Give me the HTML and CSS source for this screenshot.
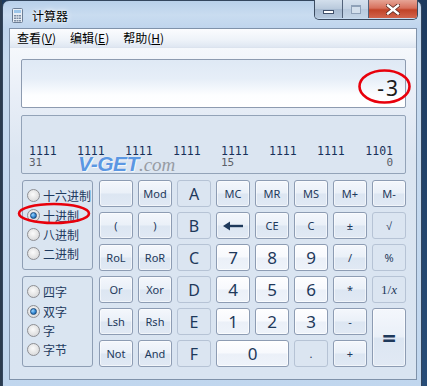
FILE: index.html
```html
<!DOCTYPE html>
<html lang="zh">
<head>
  <meta charset="UTF-8" />
  <title>计算器</title>
  <link rel="stylesheet" href="styles.css">
</head>
<body>
  <div class="window">
    <div class="titlebar">
      <svg class="app-icon" width="11" height="15" viewBox="0 0 11 15">
        <rect x="0.5" y="0.5" width="10" height="14" rx="1" fill="#e8eef5" stroke="#6d7f96"/>
        <rect x="2" y="2" width="7" height="3" fill="#9cc6ea"/>
        <g fill="#7c8da3">
          <rect x="2" y="7" width="2" height="1.5"/><rect x="4.5" y="7" width="2" height="1.5"/><rect x="7" y="7" width="2" height="1.5"/>
          <rect x="2" y="9.5" width="2" height="1.5"/><rect x="4.5" y="9.5" width="2" height="1.5"/><rect x="7" y="9.5" width="2" height="1.5"/>
          <rect x="2" y="12" width="2" height="1.5"/><rect x="4.5" y="12" width="2" height="1.5"/><rect x="7" y="12" width="2" height="1.5"/>
        </g>
      </svg>
      <span class="title">计算器</span>
      <div class="caption-buttons">
        <div class="cap cap-min"><span class="min-bar"></span></div>
        <div class="cap cap-max"><span class="max-box"></span></div>
        <div class="cap cap-close">
          <svg width="14" height="11" viewBox="0 0 14 11">
            <path d="M2 1.5 L12 9.5 M12 1.5 L2 9.5" stroke="#5a2a22" stroke-width="4" stroke-linecap="square"/>
            <path d="M2 1.5 L12 9.5 M12 1.5 L2 9.5" stroke="#fff" stroke-width="2.4" stroke-linecap="square"/>
          </svg>
        </div>
      </div>
    </div>

    <div class="client">
      <div class="menubar">
        <span class="menu-item">查看(<u>V</u>)</span>
        <span class="menu-item">编辑(<u>E</u>)</span>
        <span class="menu-item">帮助(<u>H</u>)</span>
      </div>

      <div class="content">
        <div class="display">
          <span class="value">-3</span>
        </div>

        <div class="binary">
          <div class="bits">
            <div class="group"><span>1111</span><span class="pos">31</span></div>
            <div class="group"><span>1111</span><span class="pos">&nbsp;</span></div>
            <div class="group"><span>1111</span><span class="pos">&nbsp;</span></div>
            <div class="group"><span>1111</span><span class="pos">&nbsp;</span></div>
            <div class="group"><span>1111</span><span class="pos">15</span></div>
            <div class="group"><span>1111</span><span class="pos">&nbsp;</span></div>
            <div class="group"><span>1111</span><span class="pos">&nbsp;</span></div>
            <div class="group right"><span>1101</span><span class="pos">0</span></div>
          </div>
          <div class="watermark"><span class="wm-main">V-GET</span><span class="wm-dom">.com</span></div>
        </div>

        <div class="keypad">
          <div class="side">
            <div class="panel">
              <label class="radio"><span class="dot"></span>十六进制</label>
              <label class="radio"><span class="dot checked"></span>十进制</label>
              <label class="radio"><span class="dot"></span>八进制</label>
              <label class="radio"><span class="dot"></span>二进制</label>
            </div>
            <div class="panel">
              <label class="radio"><span class="dot"></span>四字</label>
              <label class="radio"><span class="dot checked"></span>双字</label>
              <label class="radio"><span class="dot"></span>字</label>
              <label class="radio"><span class="dot"></span>字节</label>
            </div>
          </div>

          <div class="keys">
            <div class="key fn"></div>
            <div class="key fn">Mod</div>
            <div class="key off hex">A</div>
            <div class="key fn">MC</div>
            <div class="key fn">MR</div>
            <div class="key fn">MS</div>
            <div class="key fn">M+</div>
            <div class="key fn">M-</div>

            <div class="key fn">(</div>
            <div class="key fn">)</div>
            <div class="key off hex">B</div>
            <div class="key fn">
              <svg width="20" height="10" viewBox="0 0 20 10">
                <path d="M5 5 H20" stroke="#1e395b" stroke-width="2.4"/>
                <path d="M0 5 L7 0.5 V9.5 Z" fill="#1e395b"/>
              </svg>
            </div>
            <div class="key fn">CE</div>
            <div class="key fn">C</div>
            <div class="key fn">±</div>
            <div class="key off">√</div>

            <div class="key fn">RoL</div>
            <div class="key fn">RoR</div>
            <div class="key off hex">C</div>
            <div class="key num">7</div>
            <div class="key num">8</div>
            <div class="key num">9</div>
            <div class="key fn">/</div>
            <div class="key off">%</div>

            <div class="key fn">Or</div>
            <div class="key fn">Xor</div>
            <div class="key off hex">D</div>
            <div class="key num">4</div>
            <div class="key num">5</div>
            <div class="key num">6</div>
            <div class="key fn">*</div>
            <div class="key off recip">1/<i>x</i></div>

            <div class="key fn">Lsh</div>
            <div class="key fn">Rsh</div>
            <div class="key off hex">E</div>
            <div class="key num">1</div>
            <div class="key num">2</div>
            <div class="key num">3</div>
            <div class="key fn">-</div>
            <div class="key fn equals">=</div>

            <div class="key fn">Not</div>
            <div class="key fn">And</div>
            <div class="key off hex">F</div>
            <div class="key num zero">0</div>
            <div class="key off">.</div>
            <div class="key fn">+</div>
          </div>
        </div>
      </div>
    </div>
  </div>

  <svg class="mark mark-value" width="55" height="37" viewBox="0 0 55 37">
    <ellipse cx="27.5" cy="18.5" rx="25" ry="16" fill="none" stroke="#e8000b" stroke-width="2.6"/>
  </svg>
  <svg class="mark mark-radix" width="74" height="23" viewBox="0 0 74 23">
    <ellipse cx="37" cy="11.5" rx="35" ry="9.5" fill="none" stroke="#e8000b" stroke-width="2.6"/>
  </svg>
</body>
</html>
```

FILE: styles.css
```css
body {
  margin: 0;
  width: 427px;
  height: 386px;
  overflow: hidden;
  position: relative;
  background: linear-gradient(to right, #2a3b4f 0, #2a3b4f 2px, transparent 2px),
              linear-gradient(to bottom, #1d3a5e, #284d78);
  font-family: "Noto Sans", "Noto Sans CJK SC", sans-serif;
}

.window {
  margin-left: 2px;
  width: 420px;
  height: 400px;
  box-sizing: border-box;
  border: 1px solid #33465e;
  border-radius: 7px 7px 0 0;
  background: linear-gradient(to bottom, #b8d0ea 0, #c9dcf0 14px, #bfd5ed 27px, #c6daef 60px, #c0d6ee);
}

.titlebar {
  display: flex;
  align-items: center;
  height: 27px;
  padding-left: 9px;
}
.app-icon {
  margin-top: 2px;
}
.title {
  margin-left: 9px;
  margin-top: 1px;
  font-family: "Noto Sans CJK SC", sans-serif;
  font-size: 12px;
  color: #000;
  text-shadow: 0 0 6px #fff, 0 0 3px #fff;
}

.caption-buttons {
  display: flex;
  align-self: flex-start;
  margin-left: auto;
  margin-right: 3px;
  margin-top: -1px;
  height: 19px;
  border: 1px solid #3b4b60;
  border-top: none;
  border-radius: 0 0 5px 5px;
  overflow: hidden;
}
.cap {
  display: flex;
  align-items: center;
  justify-content: center;
  height: 18px;
}
.cap-min {
  width: 27px;
  border-right: 1px solid #52627a;
  background: linear-gradient(to bottom, #d3dfec, #b9c9dc 50%, #a6b9d0 51%, #b4c7dc);
}
.min-bar {
  width: 9px;
  height: 2px;
  margin-top: 5px;
  background: #fff;
  border: 1px solid #40506a;
}
.cap-max {
  width: 25px;
  border-right: 1px solid #52627a;
  background: linear-gradient(to bottom, #d6e1ee, #c4d3e4 50%, #b8c9dd 51%, #c3d4e6);
}
.max-box {
  width: 8px;
  height: 6px;
  border: 1px solid #8fa1b8;
  border-top-width: 2px;
  background: #d3dfec;
}
.cap-close {
  width: 48px;
  background: linear-gradient(to bottom, #e6a596, #d7705c 45%, #c14328 55%, #d2644c);
}

.client {
  margin: 0 4px 0 6px;
  height: 352px;
  box-sizing: border-box;
  border: 1px solid #7f92aa;
  background: #d9e4f1;
}

.menubar {
  display: flex;
  height: 18px;
  padding-left: 1px;
  align-items: center;
  border-bottom: 1px solid #dbe3ee;
  background: linear-gradient(to bottom, #fbfcfe, #eef3f9 60%, #dfe7f2);
  font-family: "Noto Sans CJK SC", sans-serif;
  font-size: 12px;
  color: #000;
}
.menu-item {
  padding: 0 6px;
  margin-right: 2px;
  line-height: 18px;
}
.menu-item u {
  text-underline-offset: 1px;
}

.content {
  padding: 11px 10px 12px 11px;
  background: linear-gradient(to bottom, #f5f8fc 0, #e8eef7 50px, #dbe5f1 110px, #d9e4f1);
}

.display {
  display: flex;
  align-items: flex-end;
  justify-content: flex-end;
  height: 49px;
  box-sizing: border-box;
  padding: 0 5px 7px 0;
  border: 1px solid #8d9bb0;
  border-radius: 2px;
  background: linear-gradient(to bottom, #dfe9f5 0, #e6eef8 40%, #fdfeff 75%, #fff);
}
.value {
  font-family: "Noto Sans", sans-serif;
  font-size: 21px;
  line-height: 24px;
  color: #1b1b1b;
  letter-spacing: 2px;
}

.binary {
  position: relative;
  display: flex;
  flex-direction: column;
  justify-content: flex-end;
  height: 59px;
  margin-top: 7px;
  box-sizing: border-box;
  padding: 0 8px 4px 7px;
  border: 1px solid #93a3b8;
  border-radius: 2px;
  background: #dbe5f1;
}
.bits {
  display: flex;
  gap: 20px;
  font-family: "DejaVu Sans Mono", monospace;
  font-size: 11.5px;
  line-height: 12px;
}
.group {
  display: flex;
  flex-direction: column;
  width: 28px;
  color: #17305a;
}
.group.right {
  align-items: flex-end;
}
.group .pos {
  color: #5b6068;
  font-size: 11px;
}
.watermark {
  position: absolute;
  left: 56px;
  top: 38px;
  font-style: italic;
  line-height: 20px;
  white-space: nowrap;
}
.wm-main {
  font-family: "Liberation Sans", sans-serif;
  font-weight: bold;
  font-size: 21px;
  letter-spacing: -0.5px;
  color: #5b97e2;
  text-shadow: 0 0 1px #fff, 1px 1px 0 #f2f6fb;
}
.wm-dom {
  font-family: "Liberation Serif", serif;
  font-size: 19px;
  color: #8c9097;
  opacity: 0.85;
}

.keypad {
  display: flex;
  gap: 6px;
  margin-top: 6px;
}
.side {
  display: flex;
  flex-direction: column;
  gap: 6px;
  margin-left: 1px;
}
.panel {
  display: flex;
  flex-direction: column;
  width: 71px;
  height: 90px;
  box-sizing: border-box;
  padding: 5px 0 0 4px;
  border: 1px solid #8e9eb4;
  border-radius: 3px;
  background: #dae5f1;
}
.panel + .panel {
  height: 91px;
}
.radio {
  display: flex;
  align-items: center;
  gap: 3px;
  height: 19.4px;
  font-family: "Noto Sans CJK SC", sans-serif;
  font-size: 12px;
  color: #1e3a5f;
}
.dot {
  position: relative;
  width: 11px;
  height: 11px;
  border-radius: 50%;
  border: 1px solid #8e8f93;
  background: radial-gradient(circle at 45% 40%, #fbfbfb 0, #e8e8e8 45%, #cfd0d3 100%);
  flex-shrink: 0;
}
.dot.checked::after {
  content: "";
  position: absolute;
  left: 2px;
  top: 2px;
  width: 5px;
  height: 5px;
  border-radius: 50%;
  border: 1px solid #1d4b7c;
  background: radial-gradient(circle at 35% 35%, #9fd6ff 0, #3a8fd8 50%, #0e5297 100%);
}

.keys {
  display: grid;
  grid-template-columns: repeat(8, 34px);
  grid-auto-rows: 27px;
  gap: 5px;
}
.key {
  display: flex;
  align-items: center;
  justify-content: center;
  box-sizing: border-box;
  border-radius: 3px;
  font-family: "Noto Sans", sans-serif;
  font-size: 11px;
  color: #1e395b;
}
.key.fn {
  border: 1px solid #8d9cb3;
  background: linear-gradient(to bottom, #f4f7fc 0, #eaf0f8 48%, #dce6f2 52%, #e1e9f4 100%);
  box-shadow: inset 0 0 0 1px rgba(255, 255, 255, 0.55);
}
.key.num {
  border: 1px solid #8d9cb3;
  background: linear-gradient(to bottom, #fefeff 0, #f7f9fd 48%, #ebf0f8 52%, #eef3fa 100%);
  box-shadow: inset 0 0 0 1px rgba(255, 255, 255, 0.7);
  font-size: 17px;
}
.key.off {
  border: 1px solid #b6c3d5;
  background: #dbe5f1;
}
.key.hex {
  font-size: 16px;
}
.key.recip {
  font-family: "Liberation Serif", serif;
  font-size: 13px;
}
.key.equals {
  grid-row: span 2;
  font-size: 24px;
  font-weight: bold;
}
.key.zero {
  grid-column: span 2;
}

.mark {
  position: absolute;
}
.mark-value {
  left: 357px;
  top: 68px;
}
.mark-radix {
  left: 17px;
  top: 202px;
}
```
